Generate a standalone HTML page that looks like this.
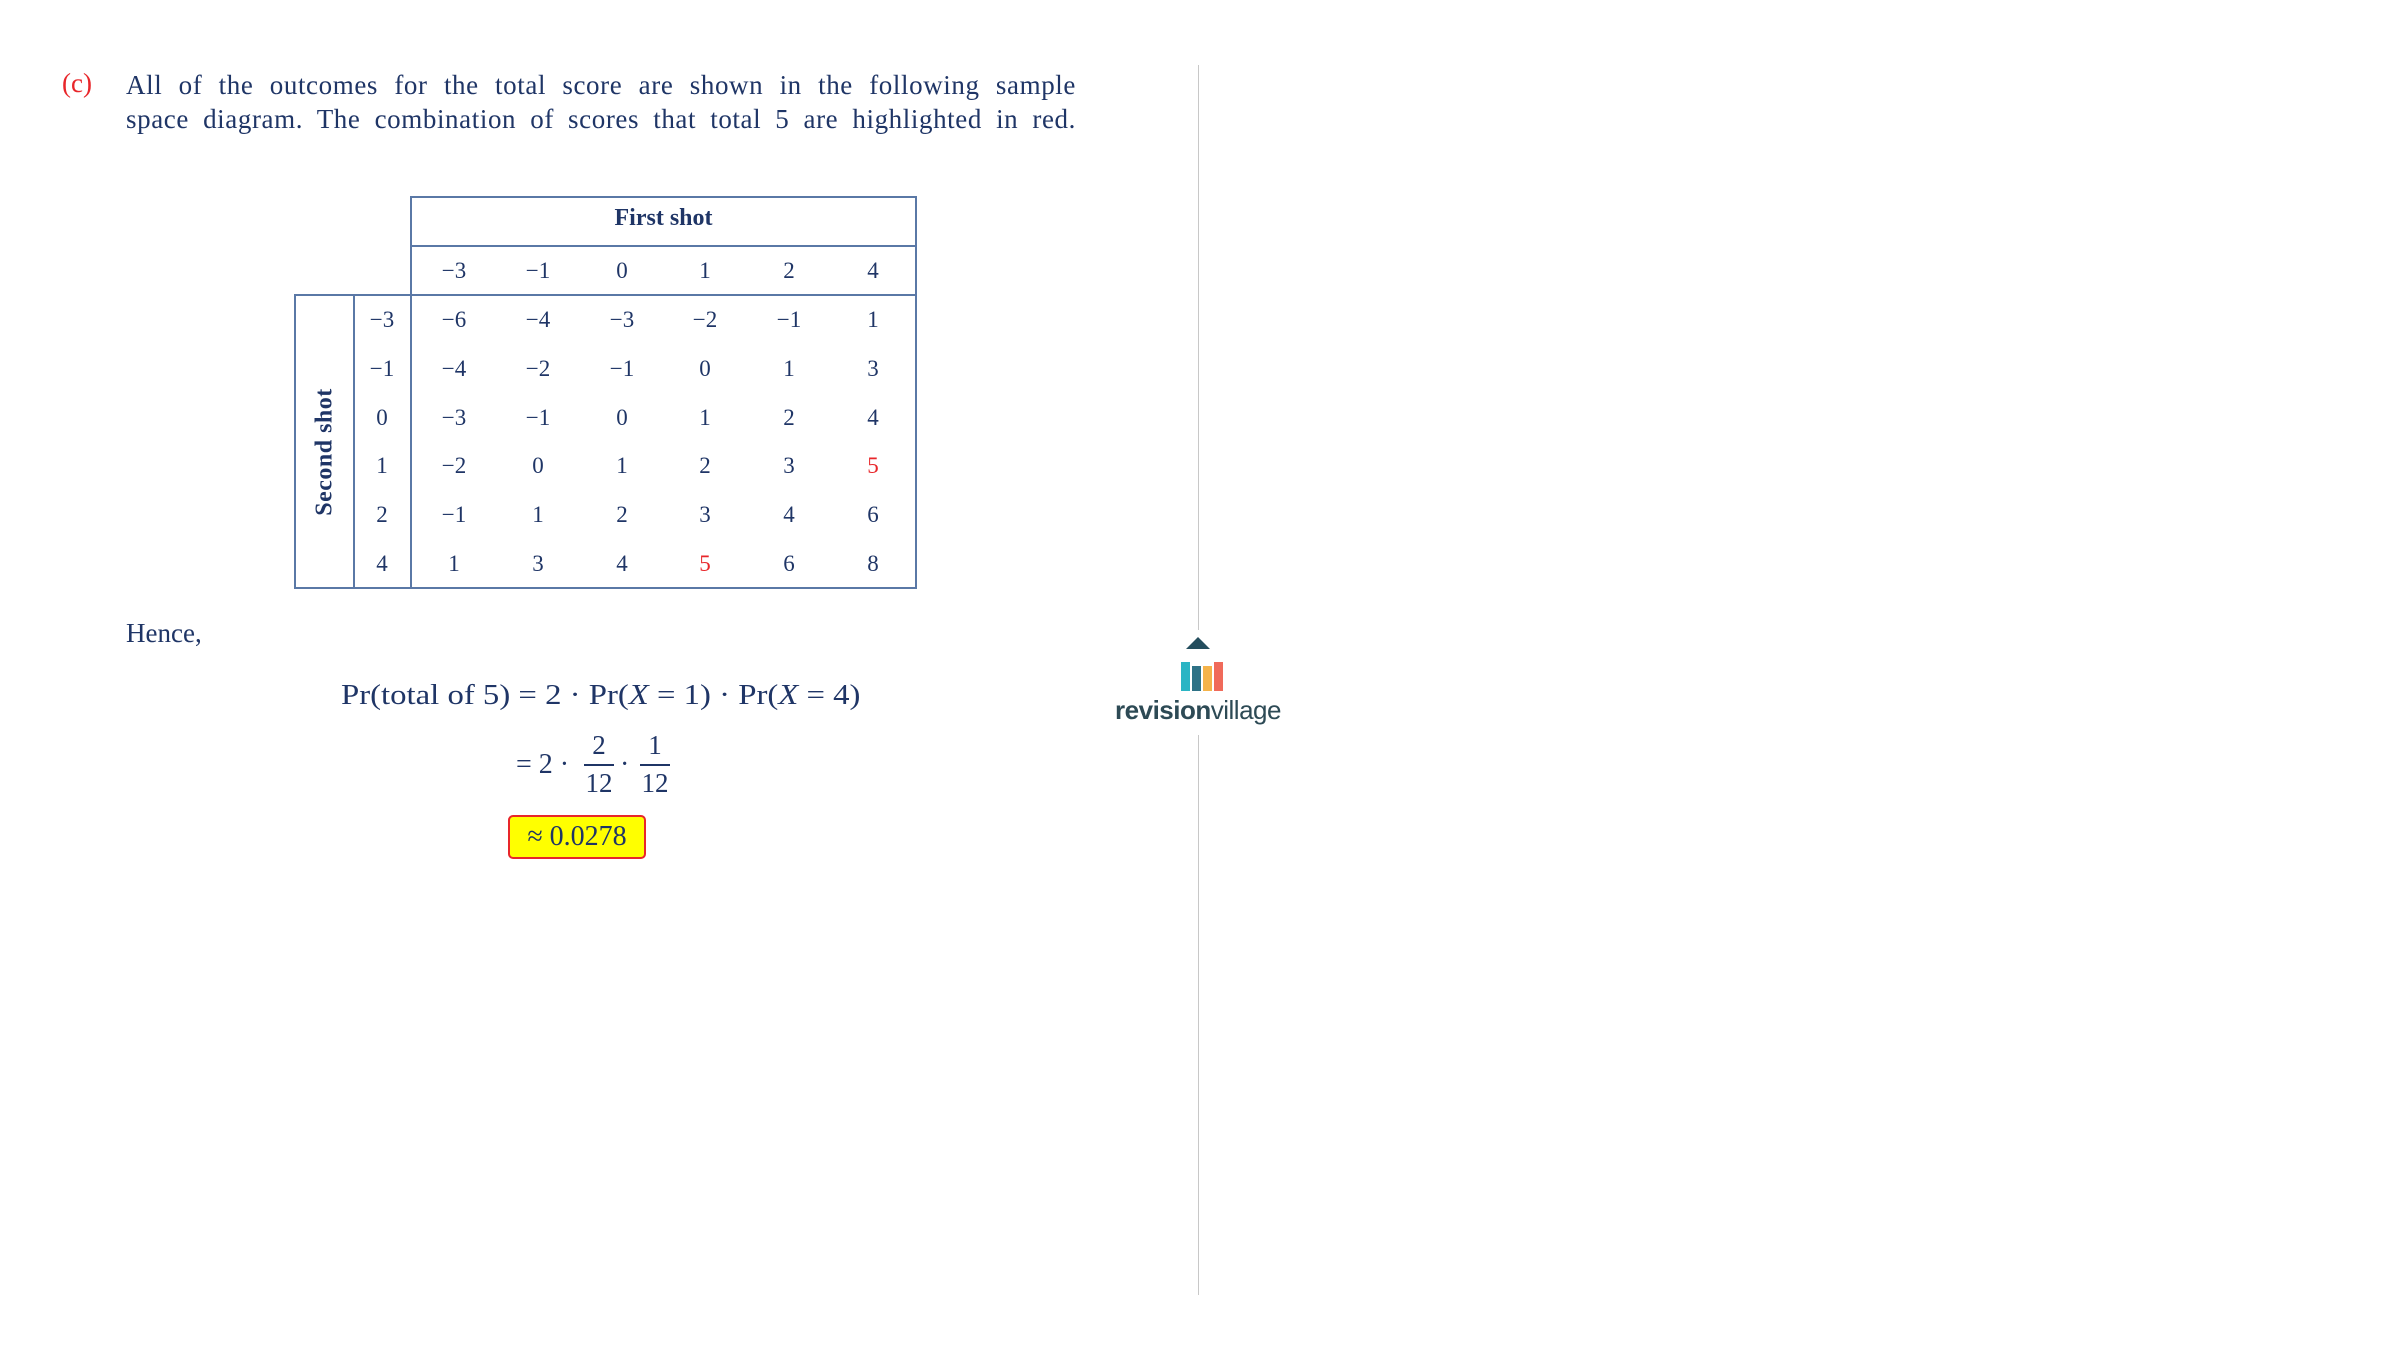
<!DOCTYPE html>
<html><head><meta charset="utf-8"><style>
body{margin:0;width:2400px;height:1345px;background:#fff;position:relative;overflow:hidden;font-family:"Liberation Serif",serif;color:#1f3566}
.a{position:absolute;white-space:nowrap}
.l{position:absolute;background:#5a78a6}
.c{position:absolute;width:84px;text-align:center;font-size:23px;line-height:24px}
.r{color:#e8262a}
</style></head><body>
<div class="a" style="left:62px;top:68px;font-size:27px;color:#e8262a">(c)</div>
<div class="a" style="left:126px;top:68px;width:950px;font-size:27px;line-height:34px;white-space:normal;text-align:justify;text-align-last:justify;letter-spacing:0.6px">All of the outcomes for the total score are shown in the following sample</div>
<div class="a" style="left:126px;top:102px;width:950px;font-size:27px;line-height:34px;white-space:normal;text-align:justify;text-align-last:justify;letter-spacing:0.6px">space diagram. The combination of scores that total 5 are highlighted in red.</div>

<div class="l" style="left:410px;top:196px;width:507px;height:2px"></div>
<div class="l" style="left:410px;top:245px;width:507px;height:2px"></div>
<div class="l" style="left:294px;top:294px;width:623px;height:2px"></div>
<div class="l" style="left:294px;top:587px;width:623px;height:2px"></div>
<div class="l" style="left:410px;top:196px;width:2px;height:393px"></div>
<div class="l" style="left:915px;top:196px;width:2px;height:393px"></div>
<div class="l" style="left:294px;top:294px;width:2px;height:295px"></div>
<div class="l" style="left:353px;top:294px;width:2px;height:295px"></div>
<div class="a" style="left:410px;top:205px;width:507px;text-align:center;font-size:24px;font-weight:bold">First shot</div>
<div class="a" style="left:325px;top:452px;transform:translate(-50%,-50%) rotate(-90deg);font-size:24px;font-weight:bold;letter-spacing:0.5px">Second shot</div>
<div id="t"></div>
<script>
var cols=[454,538,622,705,789,873],hd=["−3","−1","0","1","2","4"];
var rows=[["−6","−4","−3","−2","−1","1"],["−4","−2","−1","0","1","3"],["−3","−1","0","1","2","4"],["−2","0","1","2","3","5r"],["−1","1","2","3","4","6"],["1","3","4","5r","6","8"]];
var h="";
for(var i=0;i<6;i++){h+='<div class="c" style="left:'+(cols[i]-42)+'px;top:259px">'+hd[i]+'</div>';}
for(var j=0;j<6;j++){var y=308+j*48.8;
h+='<div class="c" style="left:340px;width:84px;top:'+y+'px">'+hd[j]+'</div>';
for(var i=0;i<6;i++){var v=rows[j][i],red=v.indexOf("r")>0;v=v.replace("r","");
h+='<div class="c'+(red?' r':'')+'" style="left:'+(cols[i]-42)+'px;top:'+y+'px">'+v+'</div>';}}
document.getElementById("t").innerHTML=h;
</script>

<div class="a" style="left:126px;top:618px;font-size:27px">Hence,</div>
<div class="a" style="left:341px;top:680px;font-size:28px;transform:scaleX(1.17);transform-origin:left top">Pr(total of 5) = 2 · Pr(<i>X</i> = 1) · Pr(<i>X</i> = 4)</div>
<div class="a" style="left:516px;top:749px;font-size:28px">= 2 ·</div>
<div class="a" style="left:584px;top:730px;width:30px;text-align:center;font-size:27px;line-height:30px">2<div style="border-top:2px solid #1f3566;margin:4px 0 2px"></div>12</div>
<div class="a" style="left:620px;top:749px;font-size:28px">·</div>
<div class="a" style="left:640px;top:730px;width:30px;text-align:center;font-size:27px;line-height:30px">1<div style="border-top:2px solid #1f3566;margin:4px 0 2px"></div>12</div>
<div class="a" style="left:508px;top:815px;width:134px;height:40px;background:#ffff00;border:2px solid #e8262a;border-radius:5px;text-align:center;font-size:28px;line-height:40px">≈ 0.0278</div>

<div style="position:absolute;left:1198px;top:65px;width:1px;height:1230px;background:#c8c8c8"></div>
<div style="position:absolute;left:1144px;top:630px;width:110px;height:105px;background:#fff"></div>
<div style="position:absolute;left:1186px;top:637px;width:0;height:0;border-left:12px solid transparent;border-right:12px solid transparent;border-bottom:12px solid #244e5e"></div>
<div style="position:absolute;left:1181px;top:662px;width:9px;height:29px;background:#2bb5c4"></div>
<div style="position:absolute;left:1192px;top:666px;width:9px;height:25px;background:#2e7286"></div>
<div style="position:absolute;left:1203px;top:666px;width:9px;height:25px;background:#f5b34a"></div>
<div style="position:absolute;left:1214px;top:662px;width:9px;height:29px;background:#f06a5a"></div>
<div class="a" style="left:1113px;top:695px;width:170px;text-align:center;font-family:'Liberation Sans',sans-serif;font-size:26px;color:#2d4a55;letter-spacing:-0.5px"><b>revision</b>village</div>
</body></html>
